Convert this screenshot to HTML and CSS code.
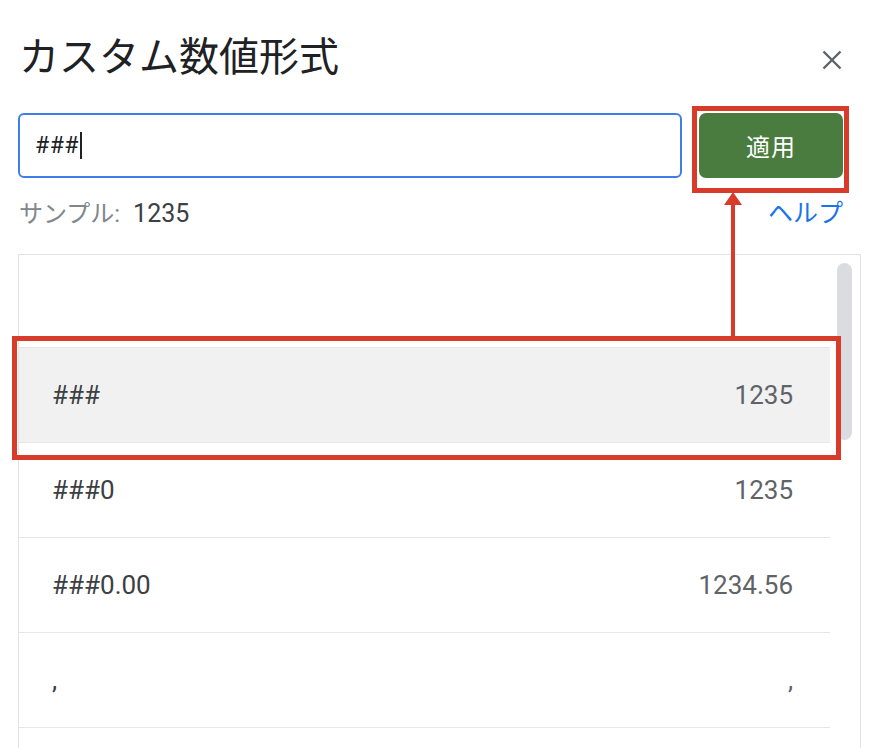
FILE: index.html
```html
<!DOCTYPE html>
<html lang="ja">
<head>
<meta charset="utf-8">
<title>カスタム数値形式</title>
<link rel="stylesheet" href="styles.css">
</head>
<body>
<div class="dialog">
  <header class="head">
    <h1 class="title">カスタム数値形式</h1>
    <button class="close" aria-label="閉じる">
      <svg width="20" height="20" viewBox="0 0 20 20"><path d="M1.5 1.5 L18.5 18.5 M18.5 1.5 L1.5 18.5" stroke="#5f6368" stroke-width="2.4" fill="none"/></svg>
    </button>
  </header>

  <div class="entry">
    <div class="field"><span class="field-text">###</span><span class="caret"></span></div>
    <button class="apply">適用</button>
  </div>

  <div class="sample-row">
    <span class="sample"><span class="sample-label">サンプル:</span><span class="sample-num">1235</span></span>
    <a class="help">ヘルプ</a>
  </div>

  <div class="list">
    <div class="rows">
      <div class="row row-blank"></div>
      <div class="row row-selected"><span class="fmt">###</span><span class="val">1235</span></div>
      <div class="row"><span class="fmt">###0</span><span class="val">1235</span></div>
      <div class="row"><span class="fmt">###0.00</span><span class="val">1234.56</span></div>
      <div class="row"><span class="fmt">,</span><span class="val">,</span></div>
      <div class="row"><span class="fmt"></span><span class="val"></span></div>
    </div>
    <div class="track"><div class="thumb"></div></div>
  </div>

  <span class="mark mark-btn"></span>
  <span class="mark mark-row"></span>
  <span class="arrow-line"></span>
  <span class="arrow-head"></span>
</div>
</body>
</html>
```

FILE: styles.css
```css
html, body {
  margin: 0;
  padding: 0;
  background: #ffffff;
  overflow: hidden;
}

body {
  font-family: "Roboto", "Noto Sans CJK JP", sans-serif;
  color: #202124;
}

.dialog {
  position: relative;
  width: 874px;
  height: 748px;
  box-sizing: border-box;
  padding: 32px 13px 0 18px;
  display: flex;
  flex-direction: column;
}

.head {
  display: flex;
  align-items: center;
  justify-content: space-between;
  height: 48px;
  padding-right: 18px;
}

.title {
  margin: 0;
  font-size: 40px;
  line-height: 48px;
  font-weight: 400;
  color: #202124;
  padding: 3px 0 0 1px;
}

.close {
  border: 0;
  background: none;
  padding: 0;
  margin: 8px 1px 0 0;
  width: 20px;
  height: 20px;
  display: flex;
}

.entry {
  display: flex;
  gap: 17px;
  margin-top: 33px;
  padding-right: 18px;
  height: 65px;
}

.field {
  flex: 1;
  border: 2px solid #3f7ee8;
  border-radius: 6px;
  box-sizing: border-box;
  display: flex;
  align-items: center;
  padding-left: 15px;
}

.field-text {
  font-size: 23px;
  color: #202124;
  letter-spacing: 0.5px;
}

.caret {
  display: inline-block;
  width: 1.5px;
  height: 27px;
  background: #202124;
  margin-left: 1px;
}

.apply {
  width: 144px;
  border: 0;
  border-radius: 7px;
  background: #4a7c3f;
  color: #ffffff;
  font-family: "Noto Sans CJK JP", sans-serif;
  font-size: 24px;
  letter-spacing: 1px;
  padding: 0;
}

.sample-row {
  display: flex;
  justify-content: space-between;
  align-items: center;
  height: 32px;
  margin-top: 17px;
  padding-right: 18px;
}

.sample {
  font-size: 24px;
  padding-left: 1px;
}

.sample-label {
  color: #80868b;
}

.sample-num {
  color: #3c4043;
  font-size: 25px;
  margin-left: 13px;
}

.help {
  color: #1a73e8;
  font-size: 25px;
  text-decoration: none;
}

.list {
  margin-top: 27px;
  border: 1px solid #e3e3e3;
  border-bottom: 0;
  display: grid;
  grid-template-columns: 1fr 30px;
  flex: 1;
  overflow: hidden;
}

.rows {
  display: flex;
  flex-direction: column;
}

.row {
  height: 94px;
  flex-shrink: 0;
  border-bottom: 1px solid #e6e6e6;
  display: flex;
  align-items: center;
  justify-content: space-between;
  padding: 0 37px 0 33px;
  font-size: 26px;
}

.row-blank {
  height: 92px;
  border-bottom: 0;
}

.row-selected {
  background: #f1f1f1;
  border-top: 1px solid #e6e6e6;
  height: 94px;
}

.fmt {
  color: #3c4043;
}

.val {
  color: #5f6368;
}

.track {
  padding: 8px 8px 0 7px;
}

.thumb {
  height: 177px;
  border-radius: 8px;
  background: #dadce0;
}

.mark {
  position: absolute;
  border: 5px solid #d93b2b;
  box-sizing: border-box;
}

.mark-btn {
  left: 692px;
  top: 106px;
  width: 157px;
  height: 87px;
}

.mark-row {
  left: 12px;
  top: 336px;
  width: 829px;
  height: 124px;
}

.arrow-line {
  position: absolute;
  left: 731px;
  top: 203px;
  width: 4px;
  height: 134px;
  background: #d93b2b;
}

.arrow-head {
  position: absolute;
  left: 724px;
  top: 192px;
  width: 0;
  height: 0;
  border-left: 9px solid transparent;
  border-right: 9px solid transparent;
  border-bottom: 13px solid #d93b2b;
}
```
